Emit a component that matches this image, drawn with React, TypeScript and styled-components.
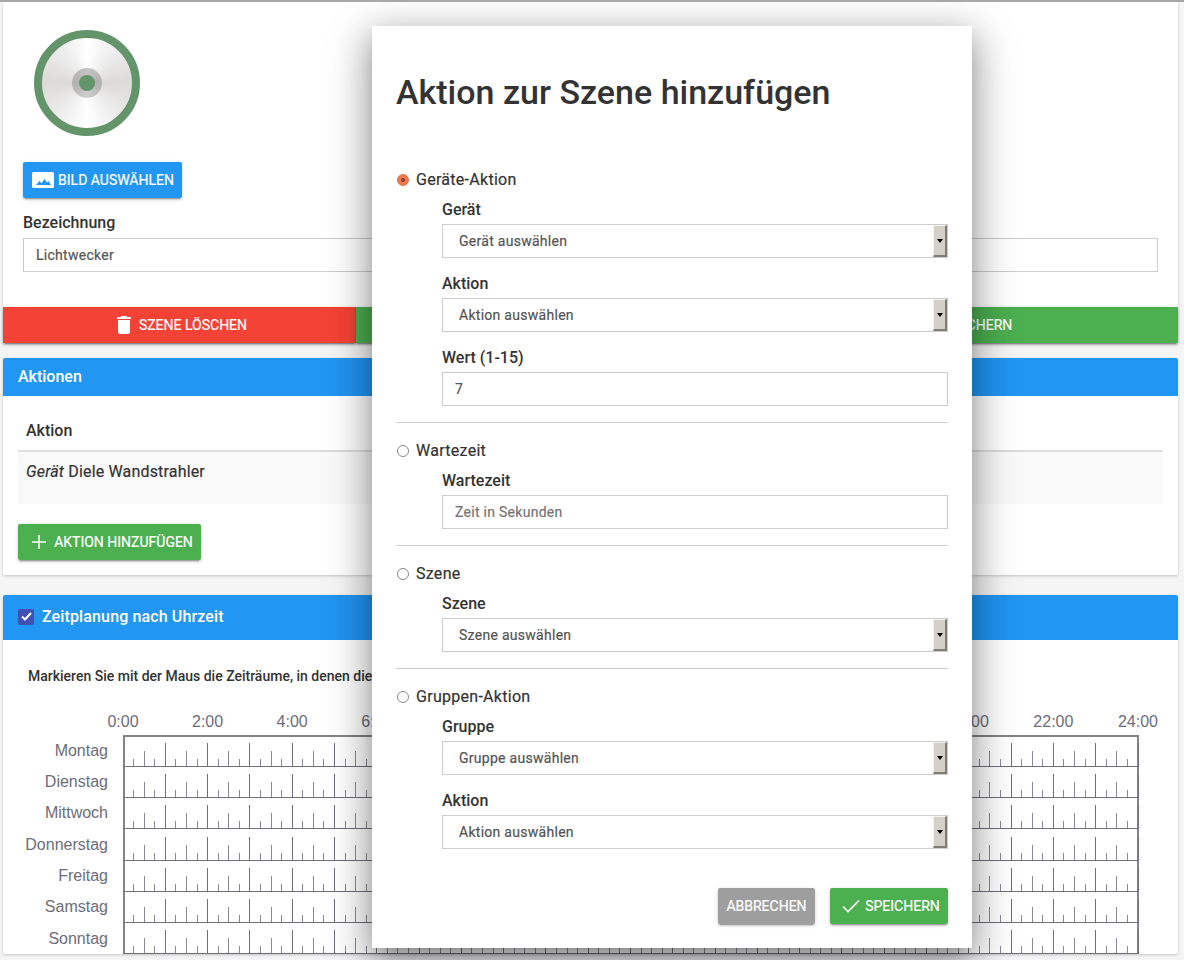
import React from "react";
import styled, { createGlobalStyle } from "styled-components";

const Global = createGlobalStyle`
  html, body { margin: 0; padding: 0; background: #f5f5f5; }
  body { font-family: Roboto, "Liberation Sans", sans-serif; color: #333; overflow: hidden; }
  * { box-sizing: border-box; }
`;

const Page = styled.div`
  position: relative;
  width: 1184px;
  height: 960px;
  overflow: hidden;
  padding: 0 6px 0 3px;
  border-top: 2px solid #a8a8a8;
`;

const Card = styled.section<{ $mb?: number }>`
  background: #fff;
  border-radius: 2px;
  box-shadow: 0 1px 3px rgba(0, 0, 0, 0.2);
  margin-bottom: ${(p) => p.$mb ?? 0}px;
`;

const TopBody = styled.div`
  padding: 28px 20px 35px;
`;

const Disc = styled.div`
  width: 106px;
  height: 106px;
  margin-left: 11px;
  border-radius: 50%;
  border: 8px solid #64946a;
  background: conic-gradient(#fff 0deg, #f0f0f0 35deg, #dcdad8 90deg, #eeeeee 140deg, #fff 180deg, #f0f0f0 215deg, #dcdad8 270deg, #eeeeee 325deg, #fff 360deg);
  display: flex;
  align-items: center;
  justify-content: center;
`;

const Hub = styled.div`
  width: 30px;
  height: 30px;
  border-radius: 50%;
  background: conic-gradient(#c4c4c4 0deg, #b0b0b0 90deg, #cfcfcf 180deg, #b0b0b0 270deg, #c4c4c4 360deg);
  display: flex;
  align-items: center;
  justify-content: center;
`;

const HubDot = styled.div`
  width: 16px;
  height: 16px;
  border-radius: 50%;
  background: #64946a;
`;

const RaisedButton = styled.button<{ $bg: string; $w?: number; $pl?: number; $gap?: number }>`
  display: inline-flex;
  align-items: center;
  justify-content: center;
  gap: ${(p) => p.$gap ?? 4}px;
  height: 36px;
  width: ${(p) => (p.$w ? `${p.$w}px` : "auto")};
  padding: 0 0 0 ${(p) => p.$pl ?? 0}px;
  border: 0;
  border-radius: 2px;
  background: ${(p) => p.$bg};
  color: #fff;
  font: 400 14px/1 Roboto, sans-serif;
  -webkit-text-stroke: 0.2px currentColor;
  text-transform: uppercase;
  box-shadow: 0 2px 2px rgba(0, 0, 0, 0.14), 0 3px 1px -2px rgba(0, 0, 0, 0.2), 0 1px 5px rgba(0, 0, 0, 0.12);
`;

const PickButton = styled(RaisedButton)`
  margin-top: 26px;
  display: flex;
`;

const CardLabel = styled.div`
  font: 500 16px/20px Roboto, sans-serif;
  color: #333;
  margin-top: 15px;
  margin-bottom: 5px;
`;

const FieldLabel = styled.div<{ $first?: boolean }>`
  font: 500 16px/20px Roboto, sans-serif;
  color: #333;
  margin-top: ${(p) => (p.$first ? 0 : 16)}px;
  margin-bottom: 4px;
`;

const TextBox = styled.div<{ $muted?: boolean }>`
  height: 34px;
  border: 1px solid #ccc;
  background: #fff;
  display: flex;
  align-items: center;
  padding-left: 12px;
  font: 400 14px/1 Roboto, sans-serif;
  letter-spacing: 0.28px;
  -webkit-text-stroke: 0.2px currentColor;
  color: ${(p) => (p.$muted ? "#757575" : "#555")};
  flex: none;
`;

const NameBox = styled(TextBox)`
  width: 1135px;
`;

const SelectBox = styled(TextBox)`
  justify-content: space-between;
  padding-left: 16px;
  padding-right: 0;
`;

const SelectArrow = styled.span`
  width: 14px;
  height: 32px;
  background: #d4d0c8;
  border-left: 1px solid #f4f3ef;
  border-top: 1px solid #f4f3ef;
  border-right: 2px solid #807c76;
  border-bottom: 2px solid #807c76;
  display: flex;
  align-items: center;
  justify-content: center;
  &::after {
    content: "";
    border-left: 3px solid transparent;
    border-right: 3px solid transparent;
    border-top: 4px solid #000;
  }
`;

const ActionBar = styled.div`
  display: flex;
  margin: 0 0 15px;
`;

const BarButton = styled(RaisedButton)`
  flex: none;
  border-radius: 0;
`;

const CardHead = styled.header<{ $h: number; $ls?: number; $pb?: number }>`
  height: ${(p) => p.$h}px;
  background: #2196f3;
  color: #fff;
  border-radius: 2px 2px 0 0;
  display: flex;
  align-items: center;
  gap: 8px;
  padding: 0 0 ${(p) => p.$pb ?? 0}px 15px;
  font: 500 16px/1 Roboto, sans-serif;
  letter-spacing: ${(p) => p.$ls ?? 0}px;
`;

const ActionsBody = styled.div`
  padding: 15px;
`;

const TableHead = styled.div`
  height: 41px;
  padding: 10px 8px 0;
  border-bottom: 2px solid #ddd;
  font: 500 16px/20px Roboto, sans-serif;
  color: #333;
`;

const TableRow = styled.div`
  height: 52px;
  padding: 10px 8px 0;
  background: #f9f9f9;
  font: 400 16px/20px Roboto, sans-serif;
  letter-spacing: 0.17px;
  -webkit-text-stroke: 0.2px currentColor;
  color: #333;
`;

const AddButton = styled(RaisedButton)`
  margin-top: 20px;
  display: flex;
`;

const CheckMark = styled.span`
  width: 16px;
  height: 16px;
  border-radius: 2px;
  background: #3f51b5;
  display: flex;
  align-items: center;
  justify-content: center;
`;

const PlannerBody = styled.div`
  padding: 27px 25px 0;
`;

const Hint = styled.p`
  margin: 0;
  font: 500 14px/18px Roboto, sans-serif;
  color: #333;
  white-space: nowrap;
`;

const Hours = styled.div`
  display: flex;
  justify-content: space-between;
  width: 1015px;
  margin: 27px 0 3px 95px;
`;

const Hour = styled.span`
  width: 0;
  display: flex;
  justify-content: center;
  white-space: nowrap;
  font: 16px/20px "Liberation Sans", sans-serif;
  color: #6d6d7a;
`;

const Chart = styled.div`
  display: flex;
  gap: 15px;
  margin-left: -5px;
`;

const Days = styled.div`
  width: 85px;
  display: flex;
  flex-direction: column;
  align-items: flex-end;
`;

const Day = styled.span`
  height: 31.35px;
  flex: none;
  display: flex;
  align-items: center;
  white-space: nowrap;
  font: 16px/20px "Liberation Sans", sans-serif;
  color: #6d6d7a;
`;

const Modal = styled.div`
  position: absolute;
  left: 372px;
  top: 24px;
  width: 600px;
  height: 922px;
  padding: 46px 24px 0;
  background: #fff;
  box-shadow: 0 24px 38px 3px rgba(0, 0, 0, 0.14), 0 9px 46px 8px rgba(0, 0, 0, 0.12), 0 11px 15px -7px rgba(0, 0, 0, 0.2), 0 8px 30px 2px rgba(0, 0, 0, 0.18);
`;

const Title = styled.h1`
  margin: 0 0 56px;
  font: 500 34px/40px Roboto, sans-serif;
  color: #333;
`;

const RadioRow = styled.label`
  display: flex;
  align-items: center;
  gap: 7px;
  height: 24px;
  font: 400 16px/1 Roboto, sans-serif;
  letter-spacing: 0.28px;
  -webkit-text-stroke: 0.2px currentColor;
  color: #333;
`;

const Radio = styled.input`
  appearance: none;
  margin: 0 0 0 1px;
  width: 12px;
  height: 12px;
  border-radius: 50%;
  border: 1px solid #8a8a8a;
  background: #fff;
  &:checked {
    border-color: #dd6c45;
    background: radial-gradient(circle, #8a4a30 0 1.6px, #f0794f 2.4px);
  }
`;

const Fields = styled.div`
  margin-left: 46px;
  padding-top: 8px;
  display: flex;
  flex-direction: column;
`;

const Divider = styled.hr`
  margin: 16px 0;
  border: 0;
  border-top: 1px solid #ccc;
`;

const ModalFooter = styled.div`
  display: flex;
  justify-content: flex-end;
  gap: 15px;
  margin-top: 39px;
`;

const hourPx = 1015 / 24;

function Ticks() {
  const rows = Array.from({ length: 7 }, (_, r) => r);
  const ticks = Array.from({ length: 96 }, (_, i) => i + 1);
  const rowH = 31.15;
  return (
    <svg width="1017" height="219" viewBox="0 0 1017 219" shapeRendering="crispEdges">
      <rect x="0" y="0" width="1016" height="2" fill="#858585" />
      <rect x="0" y="0" width="2" height="219" fill="#858585" />
      <rect x="1014" y="0" width="2" height="219" fill="#858585" />
      {rows.map((r) => {
        const base = Math.round((r + 1) * rowH);
        return (
          <g key={r}>
            <rect x="0" y={base} width="1016" height="1" fill="#6f6f7c" />
            {ticks.map((t) => {
              const h = t % 4 === 0 ? 23 : t % 2 === 0 ? 15 : 7;
              return (
                <rect
                  key={t}
                  x={Math.floor((t * hourPx) / 4)}
                  y={base - h}
                  width="1"
                  height={h}
                  fill={t % 4 === 0 ? "#6f6f7c" : "#8a8a96"}
                />
              );
            })}
          </g>
        );
      })}
    </svg>
  );
}

const ImageIcon = () => (
  <svg width="22" height="16" viewBox="0 0 22 16">
    <rect width="22" height="16" rx="1.5" fill="#fff" />
    <path d="M4 13l3.500-4 2 2.200 3-4.200 2.500 3.500 1.500-1.500 2.500 4z" fill="#2196f3" />
  </svg>
);

const Trash = () => (
  <svg width="14" height="18" viewBox="0 0 14 18">
    <path d="M1 16c0 1.100.9 2 2 2h8c1.100 0 2-.9 2-2V4H1zM14 1h-3.500l-1-1h-5l-1 1H0v2h14z" fill="#fff" />
  </svg>
);

const Plus = () => (
  <svg width="16" height="16" viewBox="0 0 16 16">
    <path d="M8 1v14M1 8h14" stroke="#fff" strokeWidth="1.600" fill="none" />
  </svg>
);

const Check = () => (
  <svg width="18" height="14" viewBox="0 0 18 14">
    <path d="M1 7.500l5 5L17 1.500" stroke="#fff" strokeWidth="1.600" fill="none" />
  </svg>
);

const SmallCheck = () => (
  <svg width="11" height="9" viewBox="0 0 11 9">
    <path d="M1 4.500l3 3 6-6.500" stroke="#fff" strokeWidth="2" fill="none" />
  </svg>
);

const Select = ({ text }: { text: string }) => (
  <SelectBox>
    {text}
    <SelectArrow />
  </SelectBox>
);

const hourLabels = ["0:00", "2:00", "4:00", "6:00", "8:00", "10:00", "12:00", "14:00", "16:00", "18:00", "20:00", "22:00", "24:00"];
const dayLabels = ["Montag", "Dienstag", "Mittwoch", "Donnerstag", "Freitag", "Samstag", "Sonntag"];

export default function App() {
  return (
    <Page>
      <Global />
      <Card $mb={15}>
        <TopBody>
          <Disc>
            <Hub>
              <HubDot />
            </Hub>
          </Disc>
          <PickButton $bg="#2196f3" $w={159} $pl={1}>
            <ImageIcon />
            Bild auswählen
          </PickButton>
          <CardLabel>Bezeichnung</CardLabel>
          <NameBox>Lichtwecker</NameBox>
        </TopBody>
        <ActionBar>
          <BarButton $bg="#f44336" $w={353} $pl={5} $gap={8}>
            <Trash />
            Szene löschen
          </BarButton>
          <BarButton $bg="#4caf50" $w={388} />
          <BarButton $bg="#4caf50" $w={434} $pl={4} $gap={6}>
            <Check />
            Speichern
          </BarButton>
        </ActionBar>
      </Card>

      <Card $mb={20}>
        <CardHead $h={38}>Aktionen</CardHead>
        <ActionsBody>
          <TableHead>Aktion</TableHead>
          <TableRow>
            <em>Gerät</em> Diele Wandstrahler
          </TableRow>
          <AddButton $bg="#4caf50" $w={183} $pl={5} $gap={7}>
            <Plus />
            Aktion hinzufügen
          </AddButton>
        </ActionsBody>
      </Card>

      <Card>
        <CardHead $h={45} $ls={0.13} $pb={2}>
          <CheckMark>
            <SmallCheck />
          </CheckMark>
          Zeitplanung nach Uhrzeit
        </CardHead>
        <PlannerBody>
          <Hint>Markieren Sie mit der Maus die Zeiträume, in denen die Szene aktiv sein soll.</Hint>
          <Hours>
            {hourLabels.map((h) => (
              <Hour key={h}>{h}</Hour>
            ))}
          </Hours>
          <Chart>
            <Days>
              {dayLabels.map((d) => (
                <Day key={d}>{d}</Day>
              ))}
            </Days>
            <Ticks />
          </Chart>
        </PlannerBody>
      </Card>

      <Modal>
        <Title>Aktion zur Szene hinzufügen</Title>

        <RadioRow>
          <Radio type="radio" name="kind" defaultChecked />
          Geräte-Aktion
        </RadioRow>
        <Fields>
          <FieldLabel $first>Gerät</FieldLabel>
          <Select text="Gerät auswählen" />
          <FieldLabel>Aktion</FieldLabel>
          <Select text="Aktion auswählen" />
          <FieldLabel>Wert (1-15)</FieldLabel>
          <TextBox>7</TextBox>
        </Fields>
        <Divider />

        <RadioRow>
          <Radio type="radio" name="kind" />
          Wartezeit
        </RadioRow>
        <Fields>
          <FieldLabel $first>Wartezeit</FieldLabel>
          <TextBox $muted>Zeit in Sekunden</TextBox>
        </Fields>
        <Divider />

        <RadioRow>
          <Radio type="radio" name="kind" />
          Szene
        </RadioRow>
        <Fields>
          <FieldLabel $first>Szene</FieldLabel>
          <Select text="Szene auswählen" />
        </Fields>
        <Divider />

        <RadioRow>
          <Radio type="radio" name="kind" />
          Gruppen-Aktion
        </RadioRow>
        <Fields>
          <FieldLabel $first>Gruppe</FieldLabel>
          <Select text="Gruppe auswählen" />
          <FieldLabel>Aktion</FieldLabel>
          <Select text="Aktion auswählen" />
        </Fields>

        <ModalFooter>
          <RaisedButton $bg="#9e9e9e" $w={97}>
            Abbrechen
          </RaisedButton>
          <RaisedButton $bg="#4caf50" $w={118} $pl={4} $gap={5}>
            <Check />
            Speichern
          </RaisedButton>
        </ModalFooter>
      </Modal>
    </Page>
  );
}
